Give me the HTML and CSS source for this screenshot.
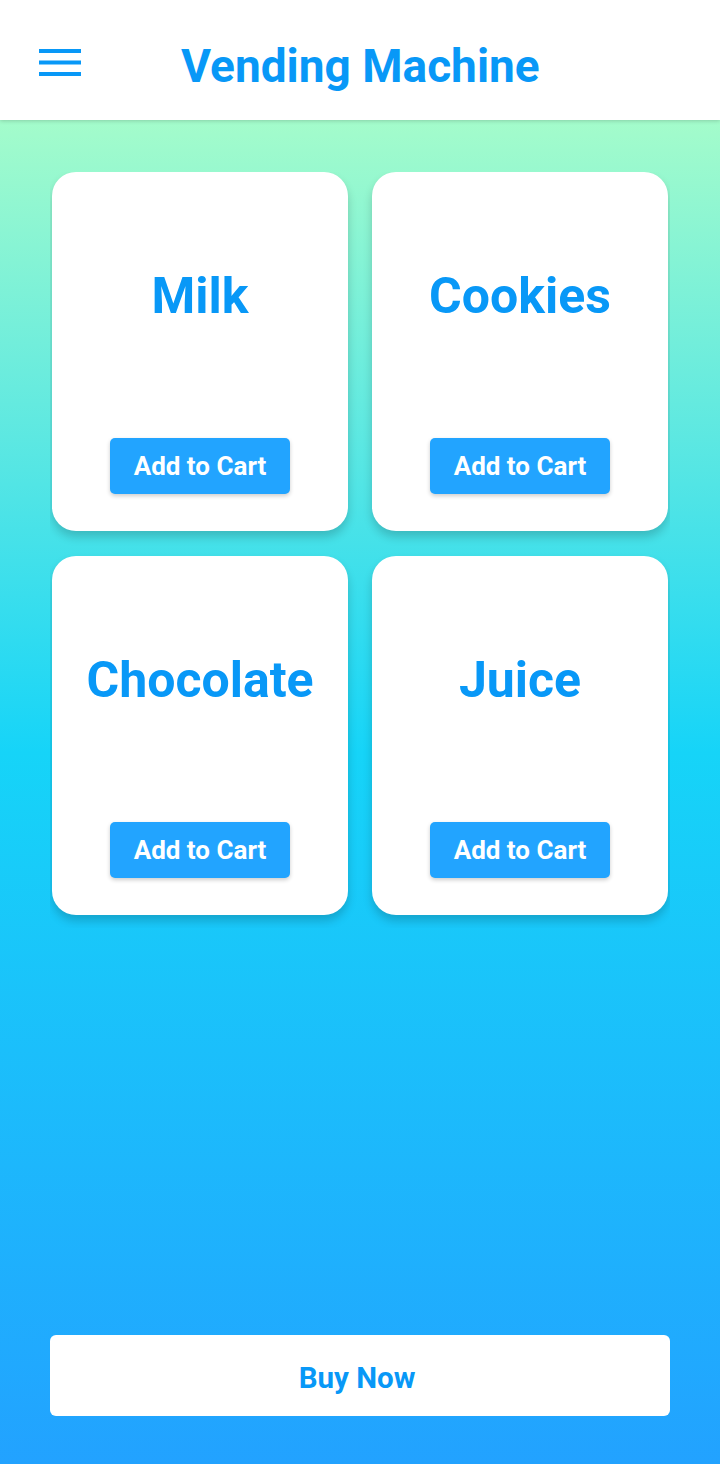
FILE: index.html
```html
<!DOCTYPE html>
<html>
<head>
<meta charset="utf-8">
<link rel="stylesheet" href="styles.css">
</head>
<body>
<div class="app">
  <header class="topbar">
    <button class="menu" aria-label="menu">
      <svg width="42" height="28" viewBox="0 0 42 28"><rect x="0" y="0" width="42" height="4" fill="#0898f7"/><rect x="0" y="11.5" width="42" height="4" fill="#0898f7"/><rect x="0" y="23" width="42" height="4" fill="#0898f7"/></svg>
    </button>
    <h1 class="title">Vending Machine</h1>
  </header>
  <main class="content">
    <section class="grid">
      <div class="card"><div class="name">Milk</div><button class="add">Add to Cart</button></div>
      <div class="card"><div class="name">Cookies</div><button class="add">Add to Cart</button></div>
      <div class="card"><div class="name">Chocolate</div><button class="add">Add to Cart</button></div>
      <div class="card"><div class="name">Juice</div><button class="add">Add to Cart</button></div>
    </section>
    <div class="spacer"></div>
    <button class="buy">Buy Now</button>
  </main>
</div>
</body>
</html>
```
FILE: styles.css
```css
* { box-sizing: border-box; }
html, body { margin: 0; padding: 0; }
body { font-family: Roboto, "Noto Sans", sans-serif; width: 720px; height: 1464px; overflow: hidden; }
.app { display: flex; flex-direction: column; height: 1464px; }
.topbar {
  height: 120px; background: #fff; display: flex; align-items: center;
  padding-top: 12px;
  position: relative; z-index: 2; box-shadow: 0 1px 4px rgba(0,0,0,0.18);
}
.menu { border: 0; background: none; padding: 0; margin-left: 39px; width: 42px; height: 28px; display: flex; margin-top: -6px; }
.title {
  margin: 0 0 0 100px; font-size: 46px; font-weight: 700; color: #0898f7;
}
.content {
  flex: 1; display: flex; flex-direction: column;
  background: linear-gradient(180deg, #a4fccb 0%, #16d4f8 47%, #22a2ff 100%);
  padding: 52px 50px 48px 50px;
}
.grid {
  display: grid; grid-template-columns: 296px 296px; column-gap: 24px; row-gap: 25px;
  padding: 0 2px 13px 2px; overflow: hidden;
}
.card {
  background: #fff; border-radius: 24px; height: 359px;
  display: flex; flex-direction: column; align-items: center;
  box-shadow: 0 6px 10px rgba(0,0,0,0.18);
}
.name { margin-top: 94px; font-size: 50px; font-weight: 700; color: #0898f7; line-height: 60px; }
.add {
  margin-top: auto; margin-bottom: 37px; width: 180px; height: 56px;
  border: 0; border-radius: 5px; background: #22a4ff; color: #fff;
  font-family: Roboto, sans-serif; font-size: 26px; font-weight: 700;
  box-shadow: 0 2px 4px rgba(0,0,0,0.2);
}
.spacer { flex: 1; }
.buy {
  height: 81px; width: 620px; border: 0; border-radius: 6px; background: #fff;
  color: #0898f7; font-family: Roboto, sans-serif; font-size: 29.5px; font-weight: 700;
  padding: 4px 6px 0 0;
}
```
